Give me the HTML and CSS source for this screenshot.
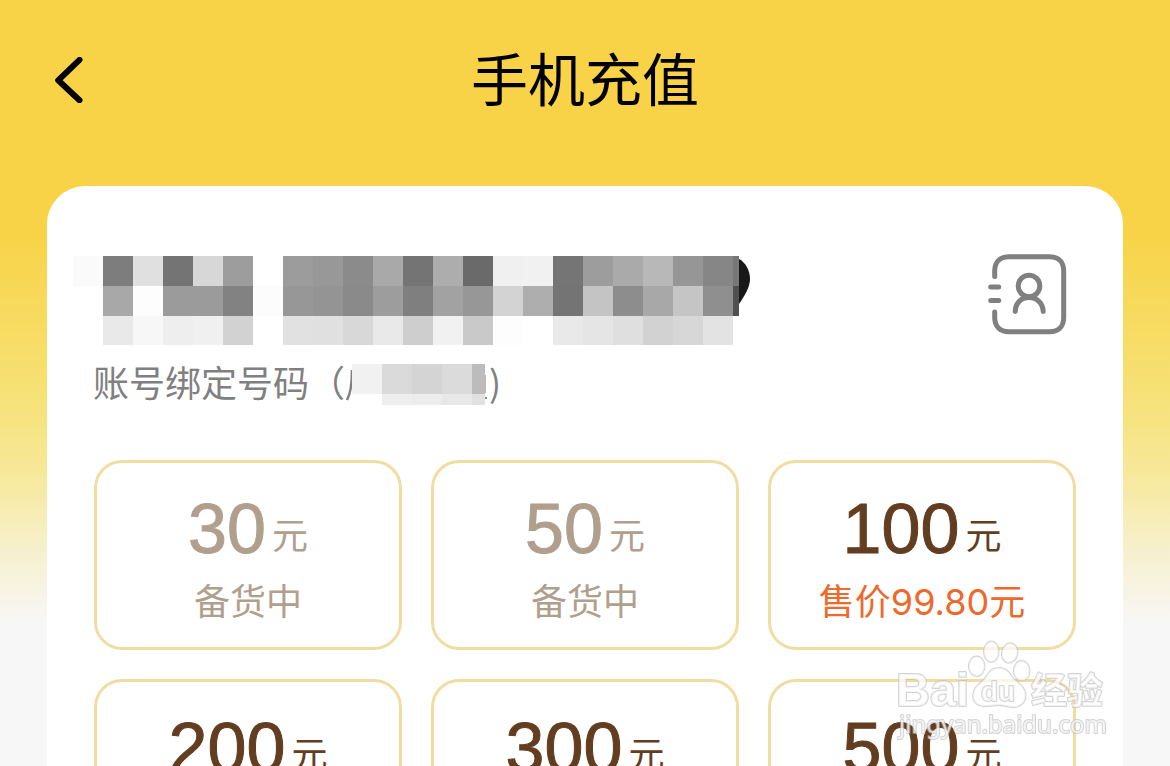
FILE: index.html
```html
<!DOCTYPE html>
<html lang="zh-CN">
<head>
<meta charset="utf-8">
<meta name="viewport" content="width=device-width, initial-scale=1">
<title>手机充值</title>
<link rel="stylesheet" href="styles.css">
</head>
<body>
<div class="screen">
  <header class="header">
    <button class="back" type="button" aria-label="返回">
      <svg width="28" height="46" viewBox="0 0 28 46" aria-hidden="true"><path d="M24.5 2.8 3.2 23.3 24.5 43.2"/></svg>
    </button>
    <h1 class="title">手机充值</h1>
  </header>
  <main class="card">
    <section class="account">
      <div class="account-info">
        <svg class="number" width="680" height="90" viewBox="0 0 680 90" shape-rendering="crispEdges" role="img" aria-label="手机号码">
          <path shape-rendering="auto" fill="#181818" d="M666 3c6 3 11 11 11 20 0 8-5 16-11 25z"/>
          <path fill="#fafafa" d="M0 0h30v30H0z"/><path fill="#7d7d7d" d="M30 0h30v30H30z"/><path fill="#e0e0e0" d="M60 0h30v30H60z"/><path fill="#747474" d="M90 0h30v30H90z"/><path fill="#d7d7d7" d="M120 0h30v30h-30z"/><path fill="#9d9d9d" d="M150 0h30v30h-30z"/><path fill="#9c9c9c" d="M210 0h30v30h-30z"/><path fill="#989898" d="M240 0h30v30h-30z"/><path fill="#8b8b8b" d="M270 0h30v30h-30z"/><path fill="#a9a9a9" d="M300 0h30v30h-30z"/><path fill="#747474" d="M330 0h30v30h-30z"/><path fill="#adadad" d="M360 0h30v30h-30z"/><path fill="#6a6a6a" d="M390 0h30v30h-30z"/><path fill="#f0f0f0" d="M420 0h30v30h-30z"/><path fill="#f1f1f1" d="M450 0h30v30h-30z"/><path fill="#757575" d="M480 0h30v30h-30z"/><path fill="#9d9d9d" d="M510 0h30v30h-30z"/><path fill="#aaaaaa" d="M540 0h30v30h-30z"/><path fill="#b8b8b8" d="M570 0h30v30h-30z"/><path fill="#969696" d="M600 0h30v30h-30z"/><path fill="#868686" d="M630 0h30v30h-30z"/><path fill="#777777" d="M660 0h6v30h-6z"/>
          <path fill="#a8a8a8" d="M30 30h30v30H30z"/><path fill="#fdfdfd" d="M60 30h30v30H60z"/><path fill="#9b9b9b" d="M90 30h60v30H90z"/><path fill="#828282" d="M150 30h30v30h-30z"/><path fill="#fcfcfc" d="M180 30h30v30h-30z"/><path fill="#979797" d="M210 30h30v30h-30z"/><path fill="#949494" d="M240 30h30v30h-30z"/><path fill="#8a8a8a" d="M270 30h30v30h-30z"/><path fill="#9d9d9d" d="M300 30h30v30h-30z"/><path fill="#7f7f7f" d="M330 30h30v30h-30z"/><path fill="#a2a2a2" d="M360 30h30v30h-30z"/><path fill="#979797" d="M390 30h30v30h-30z"/><path fill="#d3d3d3" d="M420 30h30v30h-30z"/><path fill="#aeaeae" d="M450 30h30v30h-30z"/><path fill="#747474" d="M480 30h30v30h-30z"/><path fill="#c4c4c4" d="M510 30h30v30h-30z"/><path fill="#8d8d8d" d="M540 30h30v30h-30z"/><path fill="#a8a8a8" d="M570 30h30v30h-30z"/><path fill="#c5c5c5" d="M600 30h30v30h-30z"/><path fill="#8f8f8f" d="M630 30h30v30h-30z"/><path fill="#505050" d="M660 30h6v30h-6z"/>
          <path fill="#e9e9e9" d="M30 60h30v29H30z"/><path fill="#f7f7f7" d="M60 60h30v29H60z"/><path fill="#eeeeee" d="M90 60h30v29H90z"/><path fill="#f0f0f0" d="M120 60h30v29h-30z"/><path fill="#d2d2d2" d="M150 60h30v29h-30z"/><path fill="#e1e1e1" d="M210 60h30v29h-30z"/><path fill="#e0e0e0" d="M240 60h30v29h-30z"/><path fill="#d8d8d8" d="M270 60h30v29h-30z"/><path fill="#e9e9e9" d="M300 60h30v29h-30z"/><path fill="#cecece" d="M330 60h30v29h-30z"/><path fill="#f1f1f1" d="M360 60h30v29h-30z"/><path fill="#c9c9c9" d="M390 60h30v29h-30z"/><path fill="#fdfdfd" d="M420 60h30v29h-30z"/><path fill="#e9e9e9" d="M480 60h30v29h-30z"/><path fill="#e5e5e5" d="M510 60h30v29h-30z"/><path fill="#dfdfdf" d="M540 60h30v29h-30z"/><path fill="#d2d2d2" d="M570 60h30v29h-30z"/><path fill="#d7d7d7" d="M600 60h30v29h-30z"/><path fill="#e3e3e3" d="M630 60h30v29h-30z"/>
        </svg>
        <p class="bound"><span>账号绑定号码（</span><svg width="144" height="42" viewBox="0 0 144 42" aria-hidden="true"><path d="M7 6c0 15-1 23-5 30" fill="none" stroke="#808080" stroke-width="2.5"/><g shape-rendering="crispEdges"><path fill="#f1f1f1" d="M7 0h30v30H7z"/><path fill="#fff" d="M7 30h30v11H7z"/><path fill="#dadada" d="M37 0h30v30H37z"/><path fill="#d4d4d4" d="M67 0h30v30H67z"/><path fill="#dbdbdb" d="M97 0h30v30H97z"/><path fill="#bcbcbc" d="M127 0h13v30h-13z"/><path fill="#eeeeee" d="M37 30h30v11H37z"/><path fill="#ececec" d="M67 30h30v11H67z"/><path fill="#e8e8e8" d="M97 30h30v11H97z"/><path fill="#e1e1e1" d="M127 30h13v11h-13z"/><path fill="#b8b8b8" d="M140 11h1v18h-1z"/><path fill="#888" d="M140 33h2v2h-2z"/></g></svg><span>)</span></p>
      </div>
      <button class="contacts" type="button" aria-label="通讯录">
        <svg width="80" height="82" viewBox="0 1 80 82" aria-hidden="true"><path d="M6.7 23.5V18C6.7 9 12 3.7 20.7 3.7h41C70.500 3.700 75.700 9 75.700 18v46.500c0 9-5.200 14.200-14 14.200h-41c-8.700 0-14-5.200-14-14.200V59M2.700 34h8M2.700 47.600h8"/><circle cx="41" cy="33" r="10.800"/><path d="M27.200 58.500C27.500 50 33 44.600 41 44.600s13.800 5.400 14.200 13.900"/></svg>
      </button>
    </section>
    <section class="amounts" aria-label="充值金额">
      <button class="amount" type="button" disabled><span class="value"><b>30</b><span>元</span></span><span class="note">备货中</span></button>
      <button class="amount" type="button" disabled><span class="value"><b>50</b><span>元</span></span><span class="note">备货中</span></button>
      <button class="amount" type="button"><span class="value"><b>100</b><span>元</span></span><span class="note">售价99.80元</span></button>
      <button class="amount" type="button"><span class="value"><b>200</b><span>元</span></span></button>
      <button class="amount" type="button"><span class="value"><b>300</b><span>元</span></span></button>
      <button class="amount" type="button"><span class="value"><b>500</b><span>元</span></span></button>
    </section>
  </main>
</div>
<svg class="watermark" width="216" height="106" viewBox="0 0 216 106" role="img" aria-label="Baidu 经验">
  <g class="mark">
    <ellipse cx="97.300" cy="11.700" rx="7.300" ry="10.200"/>
    <ellipse cx="115.700" cy="13" rx="7.700" ry="9.700" transform="rotate(12 115.700 13)"/>
    <ellipse cx="82.700" cy="26.300" rx="7.800" ry="9.800"/>
    <ellipse cx="127.700" cy="30.700" rx="7.800" ry="9.800"/>
    <path d="M105 28c-7 0-10 4-13 9-3 5-10 8-12 14-3 9 2 15 11 15 6 0 9-1 14-1s9 2 15 2c8 0 13-7 11-15-2-7-9-10-13-15-3-5-6-9-13-9z"/>
    <text class="logo" x="2" y="66">Bai</text>
    <text class="du" x="87" y="61">du</text>
    <text class="brand" x="137" y="64">经验</text>
    <text class="site" x="5" y="93">jingyan.baidu.com</text>
  </g>
</svg>
</body>
</html>
```
FILE: styles.css
```css
* {
  box-sizing: border-box;
}

body {
  margin: 0;
  font-family: Inter, "Noto Sans CJK SC", sans-serif;
}

button {
  padding: 0;
  border: 0;
  background: none;
  font: inherit;
  color: inherit;
}

svg {
  display: block;
}

.screen {
  height: 100vh;
  overflow-y: auto;
  scrollbar-width: none;
  background: linear-gradient(#f8d347 0, #f8d347 236px, #f6e37c 410px, #f7e898 470px, #f7f0cd 550px, #f7f7f7 624px);
}

.header {
  display: grid;
  grid-template-columns: 1fr auto 1fr;
  align-items: center;
  padding: 39px 55px 65px;
}

.back {
  justify-self: start;
}

.back path {
  fill: none;
  stroke: #000;
  stroke-width: 6;
  stroke-linecap: round;
  stroke-linejoin: round;
}

.title {
  margin: 0;
  padding-top: 2px;
  font-size: 57px;
  line-height: 80px;
  font-weight: 400;
  color: #000;
}

.card {
  margin: 0 47px;
  padding: 68px 47px 47px;
  border-radius: 38px;
  background: #fff;
}

.account {
  display: flex;
  justify-content: space-between;
  align-items: flex-start;
}

.number {
  margin: 2px 0 0 -21px;
}

.bound {
  display: flex;
  align-items: center;
  margin: 12px 0 0 -1px;
  font-size: 36px;
  line-height: 46px;
  color: #808080;
}

.bound span {
  padding-bottom: 8px;
  font-family: "Noto Sans CJK SC", sans-serif;
}

.contacts {
  margin-right: 8px;
}

.contacts svg {
  fill: none;
  stroke: #808080;
  stroke-width: 5;
  stroke-linecap: round;
}

.amounts {
  display: grid;
  grid-template-columns: repeat(3, 1fr);
  gap: 29px;
  margin-top: 48px;
}

.amount {
  display: flex;
  flex-direction: column;
  align-items: center;
  gap: 10px;
  min-height: 190px;
  padding: 26px 0 0;
  border: 3px solid #f1dca2;
  border-radius: 28px;
  background: #fff;
  color: #633d20;
}

.amount:disabled {
  color: #b19f8d;
}

.value {
  display: flex;
  align-items: center;
  gap: 6px;
  font-size: 36px;
  line-height: 80px;
}

.value b {
  font-family: "Liberation Sans", Arial, sans-serif;
  font-size: 70px;
  font-weight: 400;
  -webkit-text-stroke: 1px currentColor;
}

.value span {
  padding-top: 8px;
  font-family: "Noto Sans CJK SC", sans-serif;
  line-height: 46px;
}

.note {
  font-size: 36px;
  line-height: 46px;
  font-weight: 400;
  color: #ec6a2c;
}

.amount:disabled .note {
  color: inherit;
}

.watermark {
  position: fixed;
  right: 60px;
  bottom: 20px;
  pointer-events: none;
}

.mark {
  fill: #fff;
  fill-opacity: 0.7;
  stroke: #b8b8b8;
  stroke-opacity: 0.6;
  stroke-width: 2;
  stroke-linejoin: round;
  paint-order: stroke;
}

.logo,
.du {
  font-family: "Liberation Sans", Arial, sans-serif;
  font-weight: 700;
}

.logo {
  font-size: 47px;
}

.du {
  font-size: 28px;
}

.brand {
  font-family: "Noto Sans CJK SC", sans-serif;
  font-weight: 700;
  font-size: 36px;
}

.site {
  font-family: "Noto Sans", sans-serif;
  font-size: 24px;
}
```
